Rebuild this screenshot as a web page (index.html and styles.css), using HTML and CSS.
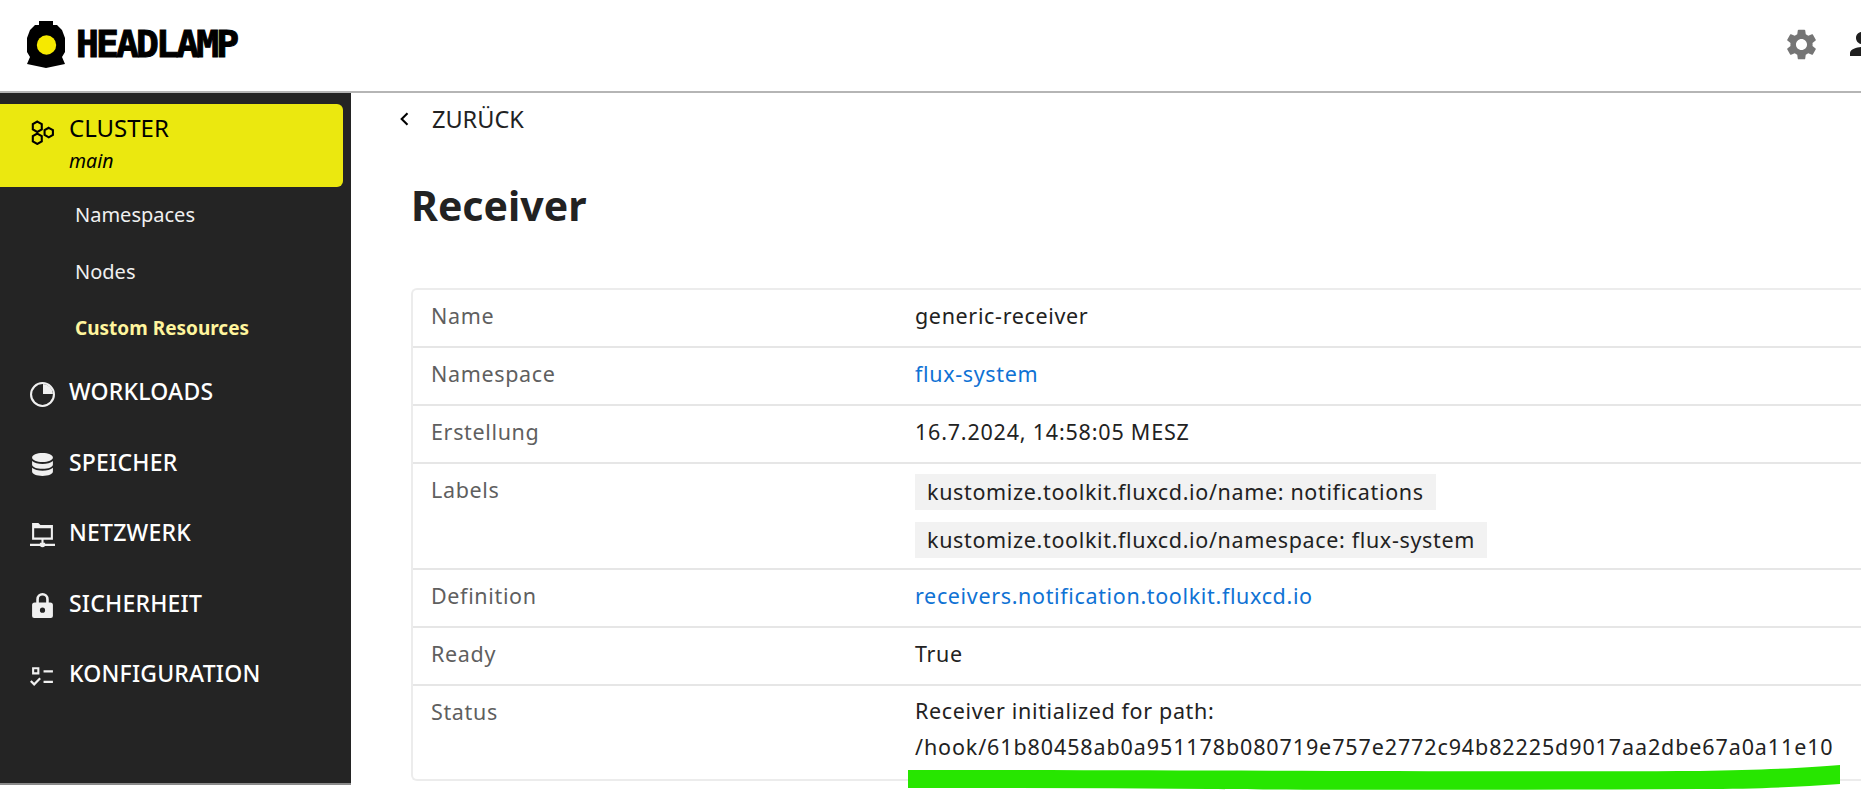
FILE: index.html
```html
<!DOCTYPE html>
<html lang="de">
<head>
<meta charset="utf-8">
<title>Headlamp</title>
<link rel="stylesheet" href="styles.css">
</head>
<body>
<header class="topbar">
  <div class="brand">
    <svg class="brand-mark" viewBox="0 0 38 47"><path fill="#000" d="M12 0H26V4H30L35 9 38 17V31L35 36 38 43 19 47 0 43 3 36 0 31V17L3 9 8 4H12z"/><circle cx="19.500" cy="24" r="9.700" fill="#f6e900"/></svg>
    <span class="brand-name">HEADLAMP</span>
  </div>
  <div class="top-actions">
    <svg class="gear" viewBox="0 0 24 24"><path fill="#757575" d="M19.14 12.94c.04-.3.06-.61.06-.94 0-.32-.02-.64-.07-.94l2.03-1.58c.18-.14.23-.41.12-.61l-1.92-3.32c-.12-.22-.37-.29-.59-.22l-2.39.96c-.5-.38-1.03-.7-1.62-.94l-.36-2.54c-.04-.24-.24-.41-.48-.41h-3.84c-.24 0-.43.17-.47.41l-.36 2.54c-.59.24-1.13.57-1.62.94l-2.39-.96c-.22-.08-.47 0-.59.22L2.74 8.87c-.12.21-.08.47.12.61l2.03 1.58c-.05.3-.09.63-.09.94s.02.64.07.94l-2.03 1.58c-.18.14-.23.41-.12.61l1.92 3.32c.12.22.37.29.59.22l2.39-.96c.5.38 1.03.7 1.62.94l.36 2.54c.05.24.24.41.48.41h3.84c.24 0 .44-.17.47-.41l.36-2.54c.59-.24 1.13-.56 1.62-.94l2.39.96c.22.08.47 0 .59-.22l1.92-3.32c.12-.22.07-.47-.12-.61l-2.01-1.58zM12 15.6c-1.98 0-3.6-1.62-3.6-3.6s1.62-3.6 3.6-3.6 3.6 1.62 3.6 3.6-1.62 3.6-3.6 3.6z"/></svg>
    <div class="person-clip"><svg class="person" viewBox="0 0 24 24"><path fill="#1f1f1f" d="M12 12c2.21 0 4-1.79 4-4s-1.79-4-4-4-4 1.79-4 4 1.79 4 4 4zm0 2c-2.67 0-8 1.34-8 4v2h16v-2c0-2.66-5.33-4-8-4z"/></svg></div>
  </div>
</header>
<div class="shell">
  <nav class="sidebar">
    <div class="nav-active">
      <svg class="nav-icon cluster-icon" viewBox="0 0 24 24"><g fill="none" stroke="#000" stroke-width="2"><path d="M7 1.500l4.300 2.500v5L7 11.500 2.700 9V4z"/><path d="M18 7.500l4 2.300v4.600l-4 2.300-4-2.300V9.800z"/><path d="M7 13l4.300 2.500v5L7 23l-4.300-2.500v-5z"/></g></svg>
      <div class="nav-active-text">
        <span class="nav-active-title">CLUSTER</span>
        <em class="nav-active-sub">main</em>
      </div>
    </div>
    <ul class="subnav">
      <li>Namespaces</li>
      <li>Nodes</li>
      <li class="subnav-current">Custom Resources</li>
    </ul>
    <ul class="nav-list">
      <li class="nav-item"><svg class="nav-icon" viewBox="0 0 24 24"><circle cx="12" cy="12" r="11" fill="none" stroke="#f0f0f0" stroke-width="2"/><path fill="#f0f0f0" d="M12.500 2V11.500H22A10 10 0 0 0 12.500 2z"/></svg>WORKLOADS</li>
      <li class="nav-item"><svg class="nav-icon" viewBox="0 0 24 24"><path fill="#f0f0f0" d="M12 1c5.500 0 10 1.800 10 4.200S17.500 9.500 12 9.500 2 7.600 2 5.200 6.500 1 12 1zM2 8.700c2 1.900 6 2.900 10 2.900s8-1 10-2.900v3.200c0 2.400-4.500 4.200-10 4.200S2 14.300 2 11.900zm0 6.400c2 1.900 6 2.900 10 2.900s8-1 10-2.900v3.700c0 2.400-4.500 4.200-10 4.200S2 21.200 2 18.800z"/></svg>SPEICHER</li>
      <li class="nav-item"><svg class="nav-icon" viewBox="0 0 24 24"><path fill="#f0f0f0" d="M2 0h6l2 2h12v14h-9v3h1.500v1H24v2H14.500a3.500 3.500 0 0 1-5 0H0v-2h9.500v-1H11v-3H2zm2 5v9h16V5z"/></svg>NETZWERK</li>
      <li class="nav-item"><svg class="nav-icon" viewBox="0 0 24 24"><path fill="#f0f0f0" d="M12 0a6 6 0 0 0-6 6v3H4.500A2.500 2.500 0 0 0 2 11.500V22a2 2 0 0 0 2 2h16a2 2 0 0 0 2-2V11.500A2.500 2.500 0 0 0 19.500 9H18V6a6 6 0 0 0-6-6zm0 2.500A3.500 3.500 0 0 1 15.500 6v3h-7V6A3.500 3.500 0 0 1 12 2.500zM12 14a2.500 2.500 0 1 1 0 5 2.500 2.500 0 0 1 0-5z"/></svg>SICHERHEIT</li>
      <li class="nav-item"><svg class="nav-icon" viewBox="0 0 24 24"><path fill="#f0f0f0" d="M2 3h7v7H2zm2 2v3h3V5zm9 1h9v2.200h-9zm0 10h9v2.200h-9zM0 17l1.500-1.500L4 18l5-5 1.500 1.500L4 21z"/></svg>KONFIGURATION</li>
    </ul>
  </nav>
  <main class="content">
    <div class="back"><svg class="back-icon" viewBox="0 0 24 24"><path fill="none" stroke="#000" stroke-width="2.500" d="M15 5l-7 7 7 7"/></svg><span>ZURÜCK</span></div>
    <h1 class="title">Receiver</h1>
    <section class="card">
      <div class="row"><div class="key">Name</div><div class="val">generic-receiver</div></div>
      <div class="row"><div class="key">Namespace</div><div class="val"><a class="link">flux-system</a></div></div>
      <div class="row"><div class="key">Erstellung</div><div class="val val-date">16.7.2024, 14:58:05 MESZ</div></div>
      <div class="row row-labels"><div class="key">Labels</div><div class="val labels">
        <span class="chip">kustomize.toolkit.fluxcd.io/name: notifications</span>
        <span class="chip">kustomize.toolkit.fluxcd.io/namespace: flux-system</span>
      </div></div>
      <div class="row"><div class="key">Definition</div><div class="val"><a class="link">receivers.notification.toolkit.fluxcd.io</a></div></div>
      <div class="row"><div class="key">Ready</div><div class="val">True</div></div>
      <div class="row row-status"><div class="key">Status</div><div class="val">Receiver initialized for path:<br><span class="hook">/hook/61b80458ab0a951178b080719e757e2772c94b82225d9017aa2dbe67a0a11e10</span></div></div>
    </section>
    <svg class="marker" viewBox="0 0 932 25" preserveAspectRatio="none"><path fill="#27e600" d="M0 5C300 5 500 7 792 6 850 5 900 3 932 0V19C890 22 850 24 792 24 600 25 400 25 300 24 200 23 100 23 0 23z"/></svg>
  </main>
</div>
</body>
</html>
```
FILE: styles.css
```css
* { box-sizing: border-box; }
html, body { margin: 0; padding: 0; }
body {
  width: 1861px;
  height: 792px;
  overflow: hidden;
  background: #fff;
  font-family: "Noto Sans", "Liberation Sans", sans-serif;
  color: #222;
}
.topbar {
  height: 93px;
  display: flex;
  align-items: center;
  justify-content: space-between;
  border-bottom: 2px solid #b5b5b5;
  padding: 0 0 3px 27px;
}
.brand { display: flex; align-items: center; gap: 11px; }
.brand-mark { width: 38px; height: 47px; }
.brand-name {
  font-family: "DejaVu Sans Mono", monospace;
  font-weight: 700;
  font-size: 38px;
  line-height: 47px;
  letter-spacing: -2.850px;
  color: #000;
  -webkit-text-stroke: 1px #000;
}
.top-actions { display: flex; align-items: center; gap: 24px; }
.gear { width: 37px; height: 37px; }
.person-clip { width: 17px; height: 36px; overflow: hidden; }
.person { width: 36px; height: 36px; }
.shell { display: flex; height: 699px; position: relative; }
.sidebar {
  width: 351px;
  height: 692px;
  background: #242424;
  border-bottom: 2px solid #8a8a8a;
  color: #f0f0f0;
  padding-top: 11px;
  flex: none;
}
.nav-active {
  width: 343px;
  height: 83px;
  background: #ebe80f;
  border-radius: 0 6px 6px 0;
  color: #000;
  display: flex;
  padding: 10px 0 0 30px;
  gap: 14px;
}
.nav-active-text { display: flex; flex-direction: column; }
.nav-active-title { font-size: 24px; line-height: 28px; }
.nav-active-sub { font-size: 19.500px; line-height: 26px; margin-top: 6px; }
.nav-icon { width: 25px; height: 25px; flex: none; }
.cluster-icon { margin-top: 6px; }
.subnav { list-style: none; margin: -1px 0 1px; padding: 0 0 0 75px; }
.subnav li { height: 57px; line-height: 57px; font-size: 20px; color: #f0f0f0; }
.subnav .subnav-current { color: #fff59d; font-weight: 700; font-size: 19px; }
.nav-list { list-style: none; margin: -2px 0 0; padding: 0 0 0 30px; }
.nav-item {
  height: 70.500px;
  display: flex;
  align-items: center;
  gap: 14px;
  font-size: 23px;
  font-weight: 500;
  letter-spacing: 0.200px;
  color: #fff;
}
.nav-item .nav-icon { margin-top: 6px; }
.content { flex: 1; padding-left: 60px; position: relative; min-width: 0; }
.back { display: flex; align-items: center; height: 50px; margin-top: 1px; font-size: 23.500px; color: #222; gap: 17px; }
.back-icon { width: 20px; height: 20px; margin-left: -16px; }
.title { margin: 33px 0 0; font-size: 41px; font-weight: 700; line-height: 56px; color: #222; }
.card {
  margin-top: 55px;
  border: 2px solid #ececec;
  border-right: 0;
  border-radius: 6px 0 0 6px;
  font-size: 21.500px;
  letter-spacing: 0.650px;
}
.row { display: flex; height: 58px; border-bottom: 2px solid #e6e6e6; }
.row:last-child { border-bottom: 0; }
.row-labels { height: 106px; }
.row-status { height: 93px; }
.key { width: 502px; padding: 12px 0 0 18px; color: #5f5f5f; line-height: 28px; flex: none; }
.val { color: #222; padding-top: 12px; line-height: 28px; }
.val-date { letter-spacing: 0.800px; }
.hook { letter-spacing: 0.890px; }
.row-status .val { line-height: 36px; padding-top: 7px; }
.link { color: #0f72d4; }
.labels { display: flex; flex-direction: column; align-items: flex-start; gap: 12px; padding-top: 10px; }
.chip { background: #f2f2f2; padding: 3px 12px; line-height: 30px; height: 36px; }
.marker { position: absolute; left: 557px; top: 672px; width: 932px; height: 25px; }
```
